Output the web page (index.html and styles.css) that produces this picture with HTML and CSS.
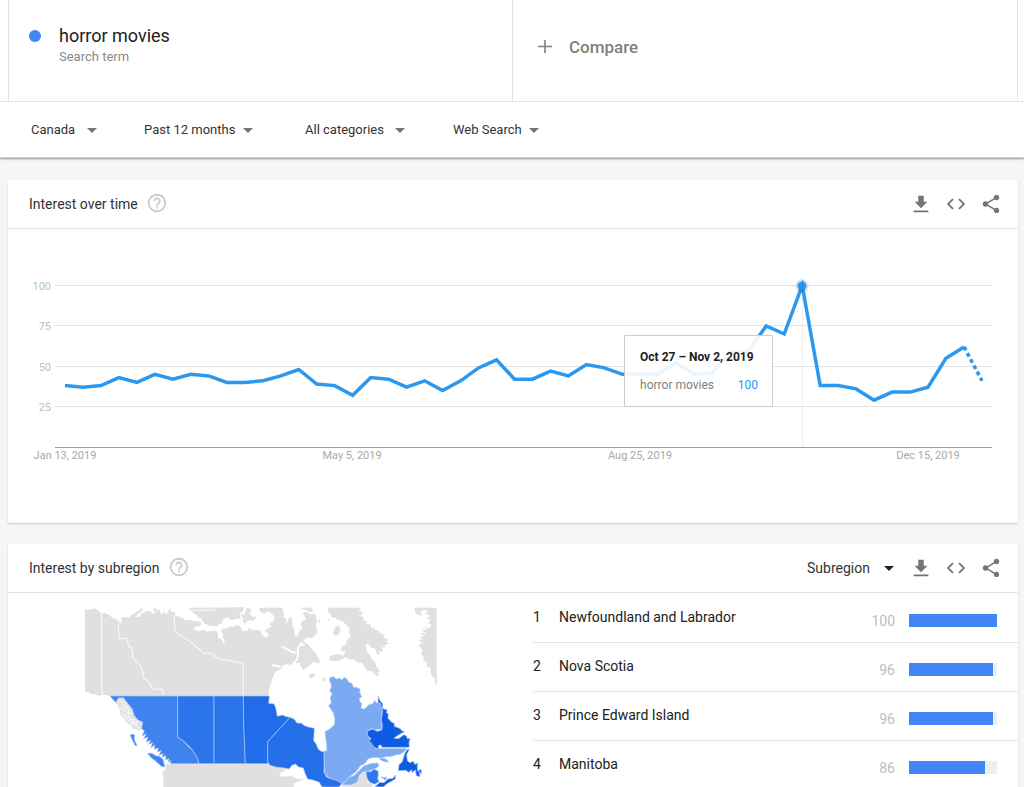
FILE: index.html
```html
<!DOCTYPE html>
<html lang="en">
<head>
  <meta charset="UTF-8">
  <meta name="viewport" content="width=device-width, initial-scale=1.0">
  <title>horror movies - Explore</title>
  <link rel="stylesheet" href="styles.css">
</head>
<body>
  <svg width="0" height="0" class="sprite" aria-hidden="true">
    <symbol id="icon-download" viewBox="0 0 24 24"><path d="M19 9.500h-4V3H9v6.500H5l7 7 7-7zM4 19v2h16v-2H4z"/></symbol>
    <symbol id="icon-embed" viewBox="0 0 24 24"><path d="M9.400 16.600L4.800 12l4.600-4.600L8 6l-6 6 6 6 1.400-1.400zm5.200 0l4.600-4.600-4.600-4.600L16 6l6 6-6 6-1.400-1.400z"/></symbol>
    <symbol id="icon-share" viewBox="0 0 24 24"><path d="M18 16.080c-.76 0-1.440.3-1.960.77L8.910 12.700c.05-.23.09-.46.09-.7s-.04-.47-.09-.7l7.050-4.110c.54.5 1.250.81 2.040.81 1.660 0 3-1.340 3-3s-1.340-3-3-3-3 1.340-3 3c0 .24.04.47.09.7L8.040 9.810C7.500 9.310 6.790 9 6 9c-1.660 0-3 1.340-3 3s1.340 3 3 3c.79 0 1.500-.31 2.040-.81l7.120 4.160c-.05.21-.08.43-.08.65 0 1.610 1.310 2.920 2.920 2.920s2.920-1.310 2.920-2.920-1.310-2.920-2.920-2.920z"/></symbol>
    <symbol id="icon-help" viewBox="0 0 24 24"><path d="M11 18h2v-2h-2v2zm1-16C6.480 2 2 6.480 2 12s4.480 10 10 10 10-4.480 10-10S17.520 2 12 2zm0 18c-4.410 0-8-3.590-8-8s3.590-8 8-8 8 3.590 8 8-3.590 8-8 8zm0-14c-2.210 0-4 1.790-4 4h2c0-1.100.9-2 2-2s2 .9 2 2c0 2-3 1.750-3 5h2c0-2.250 3-2.500 3-5 0-2.210-1.790-4-4-4z"/></symbol>
  </svg>

  <header class="top">
    <div class="terms">
      <div class="term">
        <span class="dot"></span>
        <div>
          <div class="term-name">horror movies</div>
          <div class="term-type">Search term</div>
        </div>
      </div>
      <button type="button" class="compare">
        <svg width="14" height="14" viewBox="0 0 14 14" aria-hidden="true"><path d="M7 0v13M0 6.500h14" stroke="currentColor" stroke-width="1.600"/></svg>
        Compare
      </button>
    </div>
    <div class="filters">
      <div class="picker spaced"><select aria-label="Location"><option>Canada</option></select></div>
      <div class="picker"><select aria-label="Time range"><option>Past 12 months</option></select></div>
      <div class="picker spaced"><select aria-label="Category"><option>All categories</option></select></div>
      <div class="picker"><select aria-label="Search type"><option>Web Search</option></select></div>
    </div>
  </header>

  <main>
    <section class="card">
      <div class="card-header">
        <h2>Interest over time</h2>
        <button type="button" class="icon help" aria-label="Help"><svg><use href="#icon-help"/></svg></button>
        <div class="actions">
          <button type="button" class="icon" aria-label="Download"><svg><use href="#icon-download"/></svg></button>
          <button type="button" class="icon" aria-label="Embed"><svg><use href="#icon-embed"/></svg></button>
          <button type="button" class="icon" aria-label="Share"><svg><use href="#icon-share"/></svg></button>
        </div>
      </div>
      <div class="chart">
        <svg viewBox="0 0 1010 294" role="img" aria-label="Interest over time">
          <defs>
            <filter id="glow" x="-100%" y="-100%" width="300%" height="300%"><feGaussianBlur stdDeviation="1.500"/></filter>
          </defs>
          <path class="grid" d="M47 56.500H984M47 96.500H984M47 137.500H984M47 177.500H984"/>
          <path class="marker" d="M794.500 57V218"/>
          <path class="axis" d="M47 218.500H984"/>
          <g class="y-labels">
            <text x="43" y="61">100</text>
            <text x="43" y="101">75</text>
            <text x="43" y="142">50</text>
            <text x="43" y="182">25</text>
          </g>
          <g class="x-labels">
            <text x="57" y="230">Jan 13, 2019</text>
            <text x="344" y="230">May 5, 2019</text>
            <text x="632" y="230">Aug 25, 2019</text>
            <text x="920" y="230">Dec 15, 2019</text>
          </g>
          <polyline id="line" class="line"/>
          <polyline id="partial" class="line partial"/>
          <circle cx="794" cy="57" r="5" fill="#456" opacity=".6" filter="url(#glow)"/>
          <circle cx="794" cy="57" r="4" fill="#2196f3"/>
        </svg>
        <div class="tooltip">
          <div class="tooltip-date">Oct 27 – Nov 2, 2019</div>
          <div class="tooltip-row"><span>horror movies</span><span class="tooltip-value">100</span></div>
        </div>
      </div>
    </section>

    <section class="card">
      <div class="card-header">
        <h2>Interest by subregion</h2>
        <button type="button" class="icon help" aria-label="Help"><svg><use href="#icon-help"/></svg></button>
        <div class="actions">
          <div class="picker region"><select aria-label="Resolution"><option>Subregion</option></select></div>
          <button type="button" class="icon" aria-label="Download"><svg><use href="#icon-download"/></svg></button>
          <button type="button" class="icon" aria-label="Embed"><svg><use href="#icon-embed"/></svg></button>
          <button type="button" class="icon" aria-label="Share"><svg><use href="#icon-share"/></svg></button>
        </div>
      </div>
      <div class="region-body">
        <div class="map">
          <svg viewBox="45 36 1056 540" role="img" aria-label="Map of Canada">
            <!-- northern mainland -->
            <path class="land" d="M45 44L58 44 74 40 84 46 93 55 105 54 118 60 128 70 139 73 146 79 156 83 153 72 158 65 169 67 181 67 184 59 194 55 204 47 214 40 221 42 212 51 201 61 194 66 207 66 216 55 228 49 241 47 249 56 258 53 250 45 252 38 260 41 262 50 267 41 272 54 276 61 280 50 289 54 290 62 294 49 301 40 304 52 315 51 316 61 329 67 339 70 348 76 361 75 373 79 391 79 395 90 385 95 374 95 373 105 385 108 405 104 410 110 424 107 437 107 444 115 444 128 455 133 462 148 464 136 457 125 460 116 453 110 458 101 473 99 482 94 490 96 501 89 512 95 517 107 531 107 538 98 546 106 559 104 571 108 577 119 583 127 594 127 594 114 586 111 590 102 606 93 597 88 607 80 615 68 604 55 596 49 584 56 570 50 567 38 637 38 642 56 640 67 649 71 650 91 656 69 667 67 667 91 674 104 674 121 683 125 686 111 697 100 691 90 698 76 708 76 703 62 696 54 707 50 720 58 735 55 741 74 738 94 743 111 732 124 724 130 711 126 700 138 714 148 727 165 739 177 751 201 741 206 732 199 717 212 700 226 693 214 689 203 681 205 671 202 663 209 649 208 636 214 638 220 618 229 608 248 602 267 597 286 597 303H120L109 300 96 299 86 303 75 297 62 297 55 291 45 291Z"/>
            <!-- inlets of the arctic coast -->
            <path class="inlet" d="M635 155L653 163 665 171 681 173M606 211L622 213 634 217M697 141L684 158 684 178 680 195 671 204M694 150L704 151"/>
            <!-- arctic islands -->
            <path class="land" d="M354 41L369 38 522 37 519 49 508 59 513 72 498 70 490 75 478 72 472 67 458 74 456 86 447 86 443 94 431 94 423 92 414 91 401 84 395 71 384 67 375 57 363 48Z"/>
            <path class="land" d="M530 38L544 43 539 58 548 65 560 66 552 77 536 76 524 86 517 79 519 69 511 60 523 58Z"/>
            <path class="land" d="M684 38L726 38 730 48 718 52 706 44ZM775 38L868 38 873 46 863 48 878 52 874 61 863 60 880 67 883 73 874 75 891 80 887 88 901 88 904 98 918 98 912 105 927 107 929 114 942 119 940 127 956 134 947 140 959 145 945 150 945 159 936 155 939 170 928 169 930 181 920 176 916 161 902 157 894 145 887 151 890 168 902 183 904 191 917 203 918 213 929 226 922 235 928 244 918 242 906 228 892 227 884 218 877 203 864 203 850 193 837 193 826 187 812 195 795 198 778 197 778 184 790 179 808 178 821 182 826 167 811 168 817 154 828 148 830 134 842 125 838 112 838 98 826 87 818 79 803 75 797 68 785 68 782 56 773 50Z"/>
            <path class="land" d="M792 101L800 93 808 94 812 104 807 117 797 123 790 116ZM716 243L726 235 736 237 731 246 721 251ZM756 252L762 247 766 257 760 262ZM744 76L751 72 749 84ZM772 72L780 72 776 79Z"/>
            <!-- Greenland -->
            <path class="land" d="M1033 38L1100 38 1100 275 1094 263 1094 248 1086 243 1081 231 1083 218 1072 216 1069 202 1060 196 1061 183 1053 178 1057 164 1046 150 1060 143 1046 138 1059 132 1048 126 1063 123 1051 113 1070 115 1054 104 1075 104 1060 97 1080 99 1084 88 1074 85 1082 74 1069 69 1082 63 1066 56 1074 48 1061 44 1052 52 1056 62 1045 59 1036 54Z"/>
            <path class="crack" d="M95 55V292L103 296M146 80L145 103 149 130 172 131 176 156 185 158 190 190 200 201 213 214 222 251 235 258 250 284 275 281 281 300M313 60L314 108 338 126 358 137 402 175 424 175 443 190 520 204V303M354 46H433V38"/>
            <!-- Alaska panhandle -->
            <path class="panhandle" d="M135 321L145 309 158 310 175 327 185 340 192 363 203 374 216 382 216 399 209 409 199 403 190 403 181 389 169 383 163 371 151 359 148 341Z"/>
            <path class="crack fine" d="M152 318L171 342M153 340L177 356M170 332L181 358M161 359L192 390M174 362L204 398M190 372L207 386M184 382L202 389"/>
            <!-- United States -->
            <path class="land" d="M288 508H593L600 511 620 517 644 520 648 524 634 532 628 544 644 542 657 543 669 532 683 532 697 547 707 551 690 557 674 564 670 576H280L280 545 277 530 287 526Z"/>
            <path class="land" d="M815 571L837 572 860 563 872 537 885 531 891 538 893 563 908 566 906 576H815Z"/>
            <path fill="#fff" d="M625 543L649 532 662 519 679 511 697 518 707 536 700 552 681 551 665 542 646 545Z"/>
            <!-- provinces -->
            <g class="province">
              <path fill="#4083ee" d="M120 303H323V427L340 437 355 455 366 463 380 485 387 506H301L303 496 295 503 297 491 287 494 287 482 276 487 280 476 267 480 274 466 262 472 265 459 252 463 255 450 242 458 248 443 235 448 243 436 229 441 234 426 221 431 229 416 216 423 223 407 215 402 218 382 203 374 193 362 186 341 173 325 160 308 145 309 138 322 129 314Z"/>
              <path fill="#4083ee" d="M180 418L194 419 193 434 202 453 195 451 185 431ZM232 475L246 475 257 482 268 484 279 493 285 516 274 514 263 504 254 496 245 490Z"/>
              <path fill="#2b74e9" d="M323 303H432V506H388L380 485 366 463 340 437 323 427Z"/>
              <path fill="#2b74e9" d="M432 303H520L521 385 526 506H432Z"/>
              <path fill="#216ce8" d="M520 303H598L596 325 613 327 618 343 622 364 638 360 648 365 660 367 593 440V506H526L521 385Z"/>
              <path fill="#256fe8" d="M660 367L673 373 681 384 695 385 703 392 718 397 733 400 731 437 739 448 744 461 753 469 762 470V531L769 545 781 551 795 552 816 565 807 576H756L748 562 726 554 713 552 705 535 700 519 686 516 676 507 666 511 657 522 643 519 621 517 600 511 593 501V440Z"/>
              <path fill="#7baaf3" d="M762 470L771 466 770 450 765 410 779 402 793 389 795 372 790 353 776 332 784 323 781 307 787 296 779 288 785 273 779 257 779 248 790 245 799 252 810 250 814 255 824 247 832 254 837 263 845 264 850 277 861 278 870 282 869 291 875 307 867 310 870 320 876 327 872 338 880 343 889 338 895 330 907 327 914 317 920 324 927 321 936 336 936 353 933 367 936 402 914 404 906 400 895 406 892 417 899 432 908 447 919 461 1010 461 1001 471 990 478 979 479 966 484 947 485 934 488 911 487 894 492 884 506 871 512 858 530 837 546 817 566 802 557 780 550 765 537Z"/>
              <path fill="#7baaf3" d="M835 548L852 542 867 527 880 514 900 506 923 504 927 512 919 519 902 526 878 531 868 540 861 562 842 570 817 569ZM928 488L948 492 957 501 943 500 931 494Z"/>
              <path fill="#105be3" d="M925 304L931 319 938 326 938 341 951 344 950 354 955 357 954 370 965 382 973 385 973 394 991 401 995 407 1004 410 990 417 972 429 985 431 1002 419 1010 423 1012 431 1020 430 1017 444 1018 457 936 457 933 450 925 452 926 462 912 456 903 443 896 438 903 431 892 421 893 408 907 402 922 409 936 404 937 391 934 373 938 349 931 325 924 322Z"/>
              <path fill="#105be3" d="M1018 463L1011 464 1004 476 997 500 987 509 985 527 1007 526 1016 532 1025 524 1026 533 1036 525 1039 542 1050 545 1048 530 1055 537 1053 522 1043 529 1042 513 1044 504 1034 508 1030 499 1019 503 1012 497 1010 479Z"/>
              <path fill="#3077e9" d="M888 530L903 530 911 523 924 527 925 540 923 550 927 560 914 568 899 562 891 549Z"/>
              <path fill="#105be3" d="M914 575L930 562 942 563 953 552 969 550 976 540 976 552 964 559 951 566 940 576ZM933 545L944 549 951 546 945 554Z"/>
            </g>
          </svg>
        </div>
        <ol class="regions">
          <li><span class="rank">1</span><a href="#">Newfoundland and Labrador</a><span class="value">100</span><span class="bar"><span style="width: 100%"></span></span></li>
          <li><span class="rank">2</span><a href="#">Nova Scotia</a><span class="value">96</span><span class="bar"><span style="width: 96%"></span></span></li>
          <li><span class="rank">3</span><a href="#">Prince Edward Island</a><span class="value">96</span><span class="bar"><span style="width: 96%"></span></span></li>
          <li><span class="rank">4</span><a href="#">Manitoba</a><span class="value">86</span><span class="bar"><span style="width: 86%"></span></span></li>
        </ol>
      </div>
    </section>
  </main>

  <script>
    // weekly interest, the last value is partial data
    const values = [38, 37, 38, 43, 40, 45, 42, 45, 44, 40, 40, 41, 44, 48, 39, 38, 32, 43, 42, 37, 41, 35, 41, 49, 54, 42,
      42, 47, 44, 51, 49, 45, 45, 45, 52, 45, 46, 59, 59, 75, 70, 100, 38, 38, 36, 29, 34, 34, 37, 55, 62, 41];
    const points = values.map((v, i) => (57 + i * 17.98).toFixed(1) + ',' + (218 - v * 1.615).toFixed(1));

    document.getElementById('line').setAttribute('points', points.slice(0, -1).join(' '));
    document.getElementById('partial').setAttribute('points', points.slice(-2).join(' '));
  </script>
</body>
</html>
```
FILE: styles.css
```css
* {
  box-sizing: border-box;
}
body {
  margin: 0;
  height: 100vh;
  overflow: hidden;
  background: #f6f6f6;
  color: #212121;
  font-family: Roboto, Arial, sans-serif;
  font-size: 14px;
}
button,
select {
  margin: 0;
  padding: 0;
  border: none;
  background: none;
  color: inherit;
  font: inherit;
  cursor: pointer;
}
.sprite {
  position: absolute;
}

/* search terms and filters */
.top {
  position: relative;
  background: #fff;
  border-bottom: 1px solid #ccc;
  box-shadow: 0 1px 2px rgba(0, 0, 0, 0.4);
}
.terms {
  display: grid;
  grid-template-columns: calc(50% - 1px) 1fr;
  height: 102px;
  padding: 0 6px 0 8px;
  border-bottom: 1px solid #e4e4e4;
}
.term {
  display: flex;
  gap: 18px;
  padding: 25px 20px;
  border-left: 1px solid #e4e4e4;
}
.dot {
  width: 12px;
  height: 12px;
  margin-top: 5px;
  border-radius: 50%;
  background: #4285f4;
}
.term-name {
  font-size: 18px;
  line-height: 22px;
}
.term-type {
  color: #8a8a8a;
  font-size: 13px;
  line-height: 20px;
}
.compare {
  display: flex;
  align-items: center;
  gap: 17px;
  padding: 0 25px 7px;
  border: 1px solid #e4e4e4;
  border-width: 0 1px;
  color: #808080;
  font-size: 17px;
  font-weight: 500;
}
.filters {
  display: grid;
  grid-template-columns: 113px 161px 148px auto;
  justify-content: start;
  align-items: center;
  height: 55px;
  padding: 0 31px;
}
.picker {
  position: relative;
  justify-self: start;
  font-size: 13px;
  color: #333;
}
.picker select {
  display: block;
  appearance: none;
  padding-right: 17px;
  line-height: 20px;
}
.picker.spaced select {
  padding-right: 21px;
}
.picker::after {
  content: "";
  position: absolute;
  right: 0;
  top: 8px;
  border: 5px solid transparent;
  border-top-color: #757575;
  border-bottom: none;
  pointer-events: none;
}

/* cards */
main {
  padding: 22px 6px 0 8px;
}
.card {
  margin-bottom: 21px;
  background: #fff;
  border-radius: 2px;
  box-shadow: 0 1px 2px rgba(0, 0, 0, 0.2);
}
.card-header {
  display: flex;
  align-items: center;
  height: 49px;
  padding: 0 16px 0 21px;
  border-bottom: 1px solid #e4e4e4;
}
.card-header h2 {
  margin: 0;
  color: #333;
  font-size: 14px;
  font-weight: 400;
}
.icon {
  display: flex;
  color: #757575;
}
.icon svg {
  width: 22px;
  height: 22px;
  fill: currentColor;
}
.help {
  margin-left: 8px;
  padding-bottom: 3px;
  color: #ccc;
}
.actions {
  display: flex;
  align-items: center;
  gap: 13px;
  margin-left: auto;
}
.picker.region {
  margin-right: 3px;
  font-size: 14px;
}
.picker.region select {
  padding-right: 24px;
}
.picker.region::after {
  border-top-color: #212121;
}

/* timeline */
.chart {
  position: relative;
}
.chart svg {
  display: block;
  width: 100%;
}
.grid,
.axis,
.marker {
  fill: none;
  stroke: #e4e4e4;
}
.axis {
  stroke: #9e9e9e;
}
.marker {
  stroke: #f0f0f0;
}
.x-labels,
.y-labels {
  font-size: 11px;
  text-anchor: middle;
  fill: #a8a8a8;
}
.y-labels {
  text-anchor: end;
  fill: #bdbdbd;
}
.line {
  fill: none;
  stroke: #2b98f0;
  stroke-width: 3.5;
}
.partial {
  stroke-dasharray: 4 3;
}
.tooltip {
  position: absolute;
  left: 61%;
  top: 36%;
  width: 149px;
  padding: 12px 14px 12px 15px;
  border: 1px solid #ccc;
  border-radius: 1px;
  background: rgba(255, 255, 255, 0.9);
  font-size: 12px;
  line-height: 18px;
}
.tooltip-date {
  margin-bottom: 10px;
  font-weight: 700;
  white-space: nowrap;
}
.tooltip-row {
  display: flex;
  justify-content: space-between;
  color: #808080;
}
.tooltip-value {
  color: #2b98f0;
}

/* subregions */
.region-body {
  display: grid;
  grid-template-columns: 1fr 1fr;
  gap: 20px;
}
.map {
  padding: 14px 66px 0 77px;
}
.map svg {
  display: block;
  width: 100%;
}
.land {
  fill: #e0e0e0;
}
.inlet {
  fill: none;
  stroke: #fff;
  stroke-width: 6;
}
.crack {
  fill: none;
  stroke: #f5f5f5;
  stroke-width: 4;
}
.fine {
  stroke: #fafafa;
  stroke-dasharray: 7 4;
}
.panhandle {
  fill: #e4e4e4;
}
.province path {
  stroke: #a9c6f6;
  stroke-width: 2;
}
.regions {
  margin: 0;
  padding: 1px 0 0 10px;
  list-style: none;
}
.regions li {
  display: flex;
  align-items: center;
  height: 49px;
  padding: 0 21px 2px 0;
  border-bottom: 1px solid #e4e4e4;
}
.regions .rank {
  width: 26px;
}
.regions a {
  color: inherit;
  text-decoration: none;
}
.value {
  margin-left: auto;
  padding-top: 7px;
  color: #bdbdbd;
}
.bar {
  width: 88px;
  height: 13px;
  margin: 6px 0 0 14px;
  background: #eee;
}
.bar span {
  display: block;
  height: 100%;
  background: #4285f4;
}
```
